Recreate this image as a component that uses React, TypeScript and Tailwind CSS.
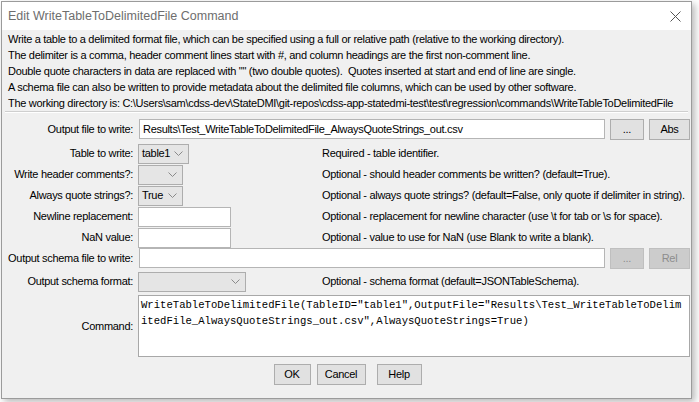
import React from "react";

const sans = "font-['Liberation_Sans',Arial,sans-serif] text-[11px] tracking-[-0.3px]";

function Chevron() {
  return (
    <svg width="9" height="5" viewBox="0 0 9 5" className="shrink-0" aria-hidden>
      <polyline points="0.5,0.5 4.5,4.5 8.5,0.5" fill="none" stroke="#8a8a8a" strokeWidth="1" />
    </svg>
  );
}

function Combo({ value, width }: { value?: string; width: string }) {
  return (
    <div className={`${width} flex h-[20px] items-center justify-between border border-[#adadad] bg-[#e5e5e5] pl-[3px] pr-[5px]`}>
      <span>{value ?? ""}</span>
      <Chevron />
    </div>
  );
}

function Field({ value, width }: { value?: string; width: string }) {
  return (
    <div className={`${width} flex h-[20px] items-center overflow-hidden whitespace-nowrap border border-[#b5b5b5] bg-white px-[3px]`}>
      {value ?? ""}
    </div>
  );
}

function Btn({ label, width, disabled }: { label: string; width: string; disabled?: boolean }) {
  return (
    <div
      className={`${width} flex h-[21px] items-center justify-center border ${
        disabled ? "border-[#bfbfbf] bg-[#cccccc] text-[#8d8d8d]" : "border-[#adadad] bg-[#e1e1e1] text-black"
      }`}
    >
      {label}
    </div>
  );
}

function Row({ label, children, note, className = "" }: { label: string; children: React.ReactNode; note?: string; className?: string }) {
  return (
    <div className={`flex h-[21px] items-center ${className}`}>
      <div className="w-[131px] shrink-0 text-right">{label}</div>
      <div className="flex w-[189px] shrink-0 pl-[5px]">{children}</div>
      {note && <div className="whitespace-nowrap">{note}</div>}
    </div>
  );
}

export default function App() {
  const desc = [
    "Write a table to a delimited format file, which can be specified using a full or relative path (relative to the working directory).",
    "The delimiter is a comma, header comment lines start with #, and column headings are the first non-comment line.",
    'Double quote characters in data are replaced with "" (two double quotes).  Quotes inserted at start and end of line are single.',
    "A schema file can also be written to provide metadata about the delimited file columns, which can be used by other software.",
    "The working directory is: C:\\Users\\sam\\cdss-dev\\StateDMI\\git-repos\\cdss-app-statedmi-test\\test\\regression\\commands\\WriteTableToDelimitedFile",
  ];

  return (
    <div className="h-[402px] w-[699px] overflow-hidden bg-white">
      <div className={`ml-px mt-px flex h-[398px] w-[691px] flex-col border border-[#9b9b9b] text-black shadow-[3px_3px_7px_rgba(0,0,0,0.28)] ${sans}`}>
        <div className="flex h-[28px] shrink-0 items-center justify-between bg-white pl-[6px] pr-[10px]">
          <span className="font-['Liberation_Sans',Arial,sans-serif] text-[12.5px] tracking-normal text-[#6e6e6e]">
            Edit WriteTableToDelimitedFile Command
          </span>
          <svg width="11" height="11" viewBox="0 0 11 11" aria-hidden>
            <path d="M0.5 0.5 L10.5 10.5 M10.5 0.5 L0.5 10.5" stroke="#555" strokeWidth="1" />
          </svg>
        </div>

        <div className="flex flex-1 flex-col bg-[#f0f0f0]">
          <div className="px-[6px] pt-px">
            {desc.map((d) => (
              <div key={d} className="h-[16px] whitespace-pre leading-[16px]">
                {d}
              </div>
            ))}
          </div>
          <div className="mx-[3px] border-t border-b border-t-[#cfcfcf] border-b-white" />

          <div className="mt-[6px] flex h-[21px] items-center">
            <div className="w-[131px] shrink-0 text-right">Output file to write:</div>
            <div className="ml-[6px] flex gap-[5px]">
              <Field width="w-[466px]" value="Results\Test_WriteTableToDelimitedFile_AlwaysQuoteStrings_out.csv" />
              <Btn label="..." width="w-[34px]" />
              <Btn label="Abs" width="w-[41px]" />
            </div>
          </div>

          <Row className="mt-[3px]" label="Table to write:" note="Required - table identifier.">
            <Combo value="table1" width="w-[51px]" />
          </Row>
          <Row label="Write header comments?:" note="Optional - should header comments be written? (default=True).">
            <Combo width="w-[45px]" />
          </Row>
          <Row label="Always quote strings?:" note="Optional - always quote strings? (default=False, only quote if delimiter in string).">
            <Combo value="True" width="w-[45px]" />
          </Row>
          <Row label="Newline replacement:" note="Optional - replacement for newline character (use \t for tab or \s for space).">
            <Field width="w-[93px]" />
          </Row>
          <Row label="NaN value:" note="Optional - value to use for NaN (use Blank to write a blank).">
            <Field width="w-[93px]" />
          </Row>

          <div className="flex h-[21px] items-center">
            <div className="w-[131px] shrink-0 text-right">Output schema file to write:</div>
            <div className="ml-[6px] flex gap-[5px]">
              <Field width="w-[466px]" />
              <Btn label="..." width="w-[34px]" disabled />
              <Btn label="Rel" width="w-[41px]" disabled />
            </div>
          </div>

          <Row className="mt-[2px]" label="Output schema format:" note="Optional - schema format (default=JSONTableSchema).">
            <Combo width="w-[108px]" />
          </Row>

          <div className="mt-[3px] flex h-[62px] items-center">
            <div className="w-[131px] shrink-0 text-right">Command:</div>
            <div className="ml-[5px] h-[62px] w-[552px] overflow-hidden whitespace-pre border border-[#a8a8a8] bg-white px-[2px] pt-[1px] font-['Liberation_Mono','Courier_New',monospace] text-[10.6px] leading-[16px] tracking-normal">
              {'WriteTableToDelimitedFile(TableID="table1",OutputFile="Results\\Test_WriteTableToDelim\nitedFile_AlwaysQuoteStrings_out.csv",AlwaysQuoteStrings=True)'}
            </div>
          </div>

          <div className="mt-[7px] flex justify-center pl-[2px]">
            <div className="flex">
              <Btn label="OK" width="w-[37px]" />
              <div className="w-[6px]" />
              <Btn label="Cancel" width="w-[49px]" />
              <div className="w-[11px]" />
              <Btn label="Help" width="w-[45px]" />
            </div>
          </div>
        </div>
      </div>
    </div>
  );
}
